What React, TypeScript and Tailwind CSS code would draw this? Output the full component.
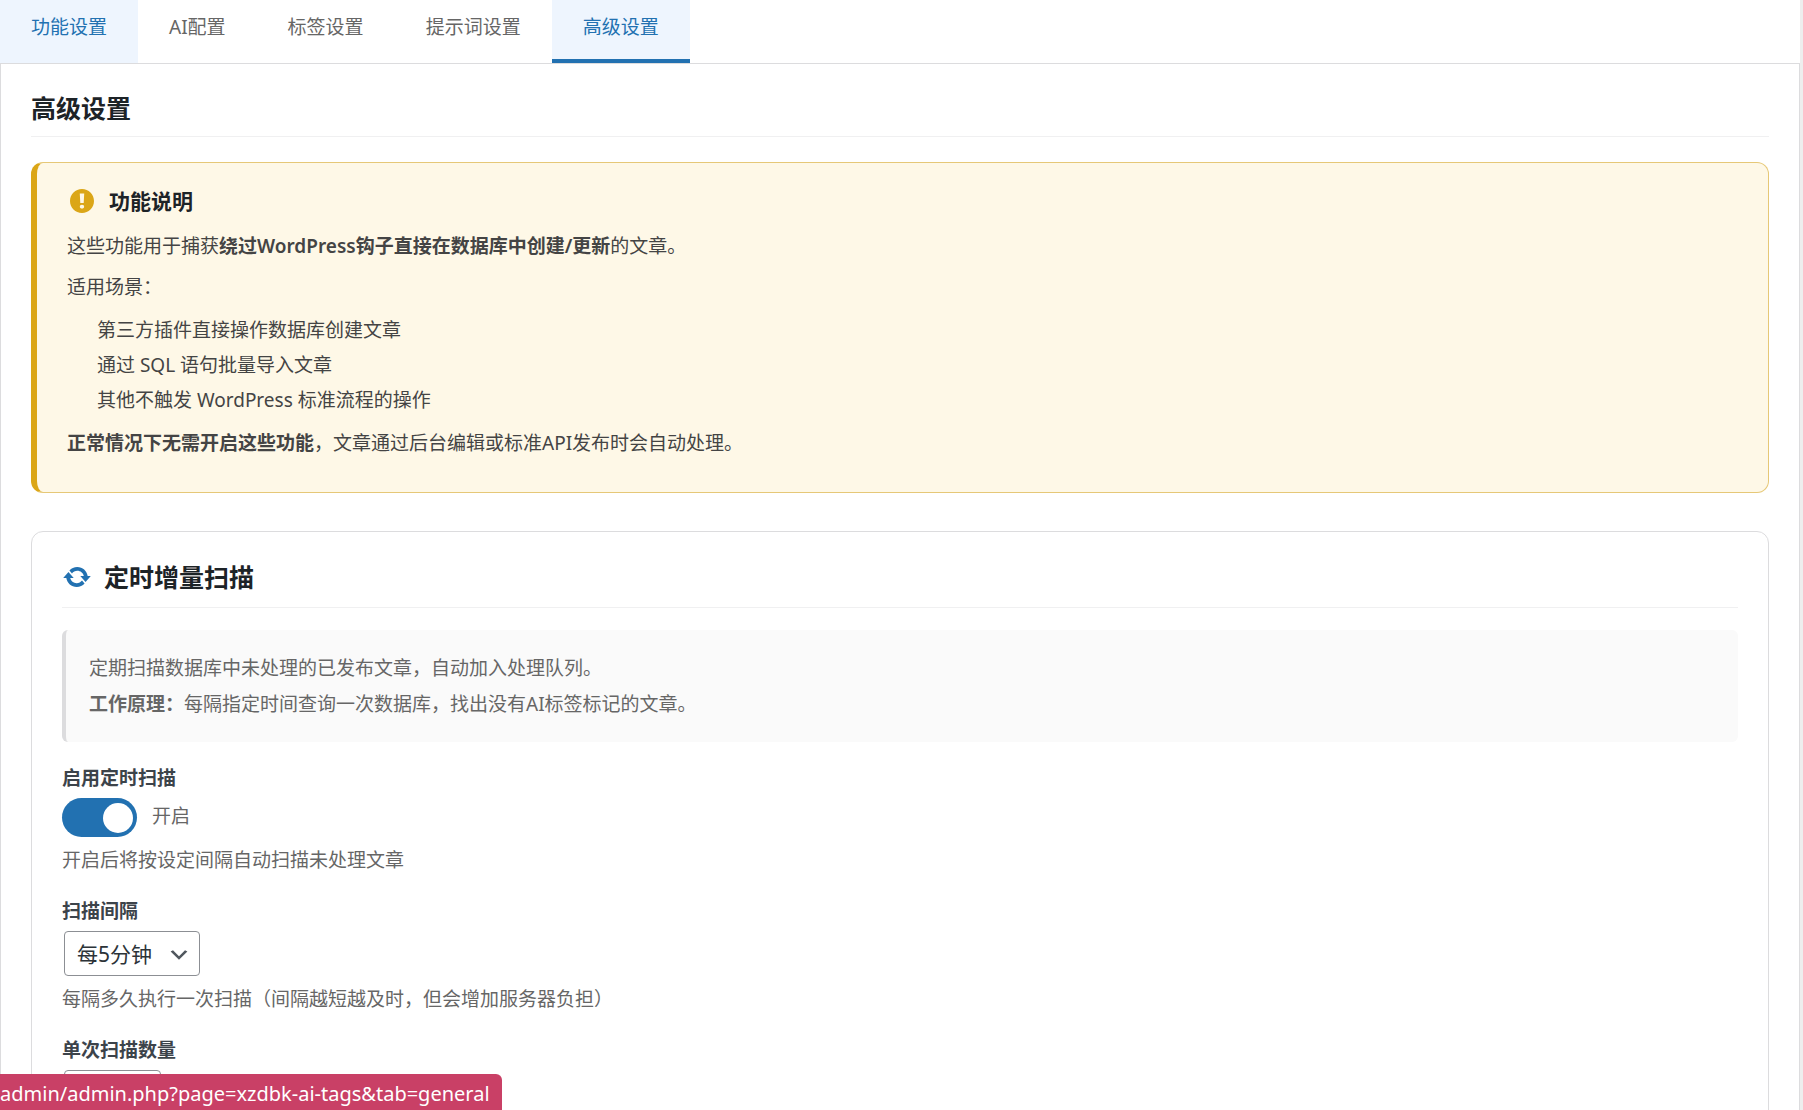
import React, { useState } from 'react';
import clsx from 'clsx';

const tabs = [
    { id: 'general', label: '功能设置' },
    { id: 'ai', label: 'AI配置' },
    { id: 'tags', label: '标签设置' },
    { id: 'prompts', label: '提示词设置' },
    { id: 'advanced', label: '高级设置' },
];

const scenarios = [
    '第三方插件直接操作数据库创建文章',
    '通过 SQL 语句批量导入文章',
    '其他不触发 WordPress 标准流程的操作',
];

function WarningIcon() {
    return (
        <svg viewBox="0 0 20 20" className="size-[30px] shrink-0 fill-[#dba617]" aria-hidden="true">
            <path d="M10 2c4.42 0 8 3.58 8 8s-3.58 8-8 8-8-3.58-8-8 3.58-8 8-8zm1.13 9.38l.35-6.46H8.52l.35 6.46h2.26zm-.09 3.36c.24-.23.37-.55.37-.96 0-.42-.12-.74-.36-.97s-.59-.35-1.06-.35-.82.12-1.07.35-.37.55-.37.97c0 .41.13.73.38.96.26.23.61.34 1.06.34s.8-.11 1.05-.34z" />
        </svg>
    );
}

function UpdateIcon() {
    return (
        <svg viewBox="0 0 20 20" className="size-[30px] shrink-0 fill-[#2271b1]" aria-hidden="true">
            <path d="M10.2 3.28c3.53 0 6.43 2.61 6.92 6h2.08l-3.5 4-3.5-4h2.32c-.45-1.97-2.21-3.45-4.32-3.45-1.45 0-2.73.71-3.54 1.78L4.95 5.66C6.23 4.2 8.11 3.28 10.2 3.28zm-.4 13.44c-3.52 0-6.43-2.61-6.92-6H.8l3.5-4c1.17 1.33 2.33 2.67 3.5 4H5.48c.45 1.97 2.21 3.45 4.32 3.45 1.45 0 2.73-.71 3.54-1.78l1.71 1.95c-1.28 1.46-3.15 2.38-5.25 2.38z" />
        </svg>
    );
}

interface FieldProps {
    id: string;
    label: string;
    hint?: string;
    children: React.ReactNode;
}

function Field({ id, label, hint, children }: FieldProps) {
    return (
        <div className="mt-[21px]">
            <label htmlFor={id} className="mb-[5px] block font-semibold text-[#3c434a]">{label}</label>
            {children}
            {hint && <p className="mt-2 text-[#666666]">{hint}</p>}
        </div>
    );
}

export default function App() {
    const [enabled, setEnabled] = useState(true);
    const [interval, setScanInterval] = useState('5');
    const [batch, setBatch] = useState('');

    return (
        <div className="h-screen overflow-hidden bg-[#eeeeee] pr-[3px] font-['Noto_Sans','Noto_Sans_CJK_SC',sans-serif] text-[19px] leading-[30px] text-[#444444]">
            {/* Tabs */}
            <nav className="flex bg-white">
                {tabs.map(tab => (
                    <a
                        key={tab.id}
                        href={`#${tab.id}`}
                        className={clsx(
                            'border-b-4 px-[31px] pt-3 pb-[17px]',
                            tab.id === 'advanced' && 'border-[#2271b1] bg-[#eef5fe] text-[#2271b1]',
                            tab.id === 'general' && 'border-transparent bg-[#eef5fe] text-[#2271b1]',
                            tab.id !== 'advanced' && tab.id !== 'general' && 'border-transparent text-[#666666]'
                        )}
                    >
                        {tab.label}
                    </a>
                ))}
            </nav>

            <main className="border border-[#dcdcde] bg-white px-[30px] pt-[29px] pb-[30px]">
                <h1 className="mb-[25px] border-b border-[#f0f0f1] pb-[13px] text-[25px] font-semibold text-[#1d2327]">高级设置</h1>

                {/* Notice */}
                <section className="mb-[38px] rounded-xl border border-l-6 border-[#e6c877] border-l-[#dba617] bg-[#fef8e7] px-[30px] pt-[23px] pb-[22px]">
                    <h2 className="mb-[15px] flex items-center gap-3 text-[21px] font-semibold text-[#1d2327]">
                        <WarningIcon />
                        功能说明
                    </h2>
                    <p className="mb-[11px]">
                        这些功能用于捕获<strong className="font-semibold">绕过WordPress钩子直接在数据库中创建/更新</strong>的文章。
                    </p>
                    <p className="mb-[11px]">适用场景：</p>
                    <ul className="mb-[10px] pl-[30px] leading-[35px]">
                        {scenarios.map(item => (
                            <li key={item}>{item}</li>
                        ))}
                    </ul>
                    <p className="mb-3">
                        <strong className="font-semibold">正常情况下无需开启这些功能</strong>，文章通过后台编辑或标准API发布时会自动处理。
                    </p>
                </section>

                {/* Scheduled scan */}
                <section className="rounded-xl border border-[#dcdcde] p-[30px]">
                    <h2 className="mb-[22px] flex items-center gap-3 border-b border-[#f0f0f1] pb-[15px] text-[25px] font-semibold text-[#1d2327]">
                        <UpdateIcon />
                        定时增量扫描
                    </h2>

                    <div className="rounded-md border-l-4 border-[#dcdcde] bg-[#fafafa] px-[23px] py-5 leading-[36px] text-[#666666]">
                        <p>定期扫描数据库中未处理的已发布文章，自动加入处理队列。</p>
                        <p><strong className="font-semibold">工作原理：</strong>每隔指定时间查询一次数据库，找出没有AI标签标记的文章。</p>
                    </div>

                    <Field id="scan-enabled" label="启用定时扫描" hint="开启后将按设定间隔自动扫描未处理文章">
                        <div className="flex items-start gap-[15px]">
                            <input
                                id="scan-enabled"
                                type="checkbox"
                                checked={enabled}
                                onChange={e => setEnabled(e.target.checked)}
                                className="flex h-[39px] w-[75px] appearance-none items-center rounded-full bg-[#c3c4c7] px-1 before:size-[30px] before:rounded-full before:bg-white checked:justify-end checked:bg-[#2271b1]"
                            />
                            <span className="pt-[3px] text-[#666666]">{enabled ? '开启' : '关闭'}</span>
                        </div>
                    </Field>

                    <Field id="scan-interval" label="扫描间隔" hint="每隔多久执行一次扫描（间隔越短越及时，但会增加服务器负担）">
                        <div className="relative ml-0.5 w-fit">
                            <select
                                id="scan-interval"
                                value={interval}
                                onChange={e => setScanInterval(e.target.value)}
                                className="block h-[45px] w-[136px] appearance-none rounded-sm border border-[#8c8f94] bg-white pl-3 text-[21px] text-[#2c3338]"
                            >
                                <option value="5">每5分钟</option>
                                <option value="15">每15分钟</option>
                                <option value="30">每30分钟</option>
                            </select>
                            <svg viewBox="0 0 20 20" className="pointer-events-none absolute top-3 right-[9px] size-6 fill-[#50575e]" aria-hidden="true">
                                <path d="M5 6l5 5 5-5 2 1-7 7-7-7 2-1z" />
                            </svg>
                        </div>
                    </Field>

                    <Field id="scan-batch" label="单次扫描数量">
                        <input
                            id="scan-batch"
                            type="number"
                            value={batch}
                            onChange={e => setBatch(e.target.value)}
                            className="ml-0.5 block h-[45px] w-[97px] rounded-sm border border-[#8c8f94] bg-white px-3"
                        />
                    </Field>
                </section>
            </main>

            {/* Link preview */}
            <div className="fixed bottom-0 left-0 rounded-tr-md bg-[#c94066] pt-[5px] pr-3 pb-px text-[20px] text-white">
                admin/admin.php?page=xzdbk-ai-tags&amp;tab=general
            </div>
        </div>
    );
}
